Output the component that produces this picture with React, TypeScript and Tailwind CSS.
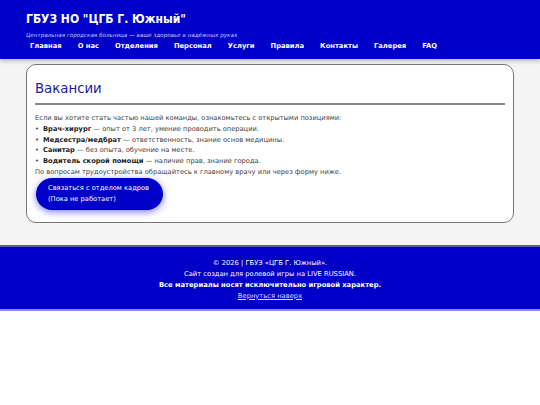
import React from "react";

const nav = ["Главная", "О нас", "Отделения", "Персонал", "Услуги", "Правила", "Контакты", "Галерея", "FAQ"];

const vacancies = [
  { title: "Врач-хирург", text: "опыт от 3 лет, умение проводить операции." },
  { title: "Медсестра/медбрат", text: "ответственность, знание основ медицины." },
  { title: "Санитар", text: "без опыта, обучение на месте." },
  { title: "Водитель скорой помощи", text: "наличие прав, знание города." },
];

export default function App() {
  return (
    <div className="bg-[#f4f4f4] font-['DejaVu_Sans',sans-serif] text-[#333]">
      <header className="h-[59px] bg-[#0000c8] px-[26px] pt-[11px] text-white shadow-[0_2px_4px_rgba(0,0,0,0.25)]">
        <h1 className="font-['DejaVu_Sans_Condensed','DejaVu_Sans',sans-serif] text-[12px] leading-[16px] font-bold">
          ГБУЗ НО "ЦГБ Г. Южный"
        </h1>
        <p className="mt-[4px] text-[5.6px] leading-[8px] text-[#c8c8ff] italic">
          Центральная городская больница — ваше здоровье в надёжных руках
        </p>
        <nav className="mt-[1px] flex gap-[16px] pl-[4px] text-[6.75px] leading-[12px] font-bold">
          {nav.map((n) => (
            <a key={n} href="#" className="text-white">
              {n}
            </a>
          ))}
        </nav>
      </header>

      <main className="px-[26px] pt-[5px] pb-[22px]">
        <section className="rounded-[10px] border border-[#777] bg-white px-[8px] pt-[12px] pb-[12px]">
          <h2 className="text-[13.3px] leading-[24px] text-[#1a1aa0]">Вакансии</h2>
          <hr className="mt-[2px] mb-[8px] h-[2px] border-0 bg-[#888]" />
          <div className="text-[6.7px] leading-[10.8px] text-[#444]">
            <p>Если вы хотите стать частью нашей команды, ознакомьтесь с открытыми позициями:</p>
            <ul>
              {vacancies.map((v) => (
                <li key={v.title} className="flex">
                  <span className="w-[8px]">•</span>
                  <span>
                    <b className="text-[#222]">{v.title}</b> — {v.text}
                  </span>
                </li>
              ))}
            </ul>
            <p>По вопросам трудоустройства обращайтесь к главному врачу или через форму ниже.</p>
          </div>
          <button className="mt-0 ml-[1px] flex h-[32px] w-[127px] flex-col justify-center rounded-full bg-[#0000c8] pl-[12px] text-left text-[6.7px] leading-[11px] text-white shadow-[0_2px_7px_rgba(40,40,255,0.6)]">
            <span>Связаться с отделом кадров</span>
            <span>(Пока не работает)</span>
          </button>
        </section>
      </main>

      <footer className="border-t-[2px] border-b-[2px] border-t-[#5a5ab4] border-b-[#8c8cff] bg-[#0000c8] pt-[11px] pb-[7px] text-center text-[6.75px] leading-[11px] text-white">
        <p>© 2026 | ГБУЗ «ЦГБ Г. Южный».</p>
        <p>Сайт создан для ролевой игры на LIVE RUSSIAN.</p>
        <p className="font-bold">Все материалы носят исключительно игровой характер.</p>
        <a href="#" className="text-[#dcdcff] underline">
          Вернуться наверх
        </a>
      </footer>
    </div>
  );
}
